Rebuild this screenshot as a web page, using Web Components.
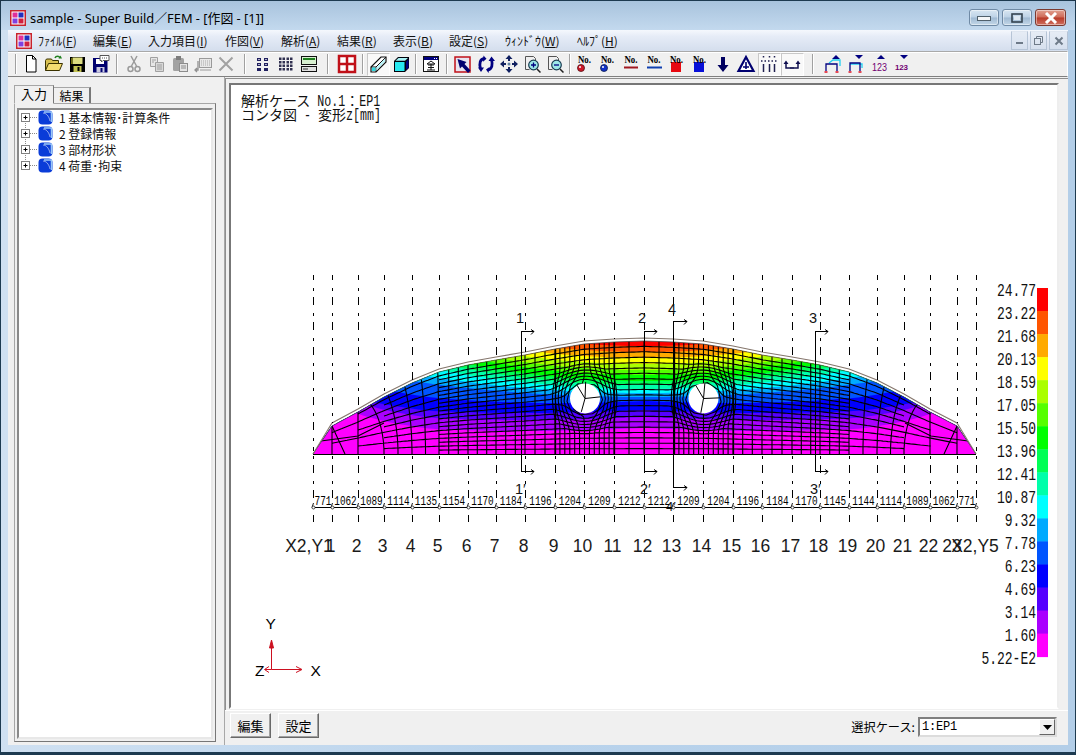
<!DOCTYPE html>
<html lang="ja"><head><meta charset="utf-8"><title>sample - Super Build／FEM</title>
<style>
html,body{margin:0;padding:0;background:#1b3347}
body{width:1076px;height:755px;overflow:hidden;font:12px "Noto Sans CJK JP",sans-serif;color:#000}
</style></head><body>
<win-frame>
  <win-titlebar slot="title">sample - Super Build／FEM - [作図 - [1]]</win-titlebar>
  <win-menubar slot="menu">
    <menu-item w="55">ﾌｧｲﾙ(<u>F</u>)</menu-item>
    <menu-item w="55">編集(<u>E</u>)</menu-item>
    <menu-item w="77">入力項目(<u>I</u>)</menu-item>
    <menu-item w="56">作図(<u>V</u>)</menu-item>
    <menu-item w="56">解析(<u>A</u>)</menu-item>
    <menu-item w="56">結果(<u>R</u>)</menu-item>
    <menu-item w="56">表示(<u>B</u>)</menu-item>
    <menu-item w="56">設定(<u>S</u>)</menu-item>
    <menu-item w="72">ｳｨﾝﾄﾞｳ(<u>W</u>)</menu-item>
    <menu-item w="60">ﾍﾙﾌﾟ(<u>H</u>)</menu-item>
  </win-menubar>
  <win-toolbar slot="toolbar"></win-toolbar>
  <side-panel slot="side">
    <tree-item n="1">1 基本情報･計算条件</tree-item>
    <tree-item n="2">2 登録情報</tree-item>
    <tree-item n="3">3 部材形状</tree-item>
    <tree-item n="4" last>4 荷重･拘束</tree-item>
  </side-panel>
  <drawing-view slot="drawing"></drawing-view>
  <footer-bar slot="footer">
    <push-button>編集</push-button>
    <push-button>設定</push-button>
    <case-combo label="選択ケース:" value="1:EP1"></case-combo>
  </footer-bar>
</win-frame>
<script>
const def=(name,css,html,init)=>customElements.define(name,class extends HTMLElement{
  constructor(){super();const r=this.attachShadow({mode:'open'});
    r.innerHTML=`<style>${css}</style>${typeof html==='function'?html(this):html}`;}
  connectedCallback(){if(init&&!this._i){this._i=1;init(this);}}
});
const UI='"Noto Sans CJK JP",sans-serif';
const appIcon=`<svg width="16" height="16" viewBox="0 0 16 16"><rect width="16" height="16" fill="#c8232c"/><rect x="1.5" y="1.5" width="13" height="13" fill="#fff"/><rect x="2.5" y="2.5" width="5" height="5" fill="#e0309a"/><rect x="8.5" y="2.5" width="5" height="5" fill="#2030c0"/><rect x="2.5" y="8.5" width="5" height="5" fill="#8040e0"/><rect x="8.5" y="8.5" width="5" height="5" fill="#d02040"/></svg>`;

def('win-frame',`
:host{display:flex;flex-direction:column;width:1076px;height:755px;box-sizing:border-box;position:relative;
  background:linear-gradient(90deg,#cfe0f1 0,#b9d3ec 50%,#b3cee8 100%);border:1px solid #1d3a50;border-bottom-width:3px;border-radius:6px 6px 0 0;padding:0 7px 7px}
.client{flex:1;display:flex;min-height:0;background:#f0f0f0}
`,`<slot name="title"></slot><slot name="menu"></slot><slot name="toolbar"></slot>
<div class="client"><slot name="side"></slot><div style="flex:1;display:flex;flex-direction:column;min-width:0;border-left:1px solid #a8a8a8"><slot name="drawing"></slot><slot name="footer"></slot></div></div>`);

def('win-titlebar',`
:host{display:flex;align-items:center;height:29px;box-sizing:border-box;margin:0 -7px;padding:4px 9px 0;
  background:linear-gradient(180deg,#a8c3dd 0,#c3d9ee 100%);font:12.85px "Noto Sans","Noto Sans CJK JP",sans-serif;color:#000}
.ic{margin-right:4px;display:flex}.t{flex:1;white-space:nowrap}
.b{display:flex;gap:3px}
.w{box-sizing:border-box;height:17px;width:30px;border:1px solid #6f8aa5;border-radius:3px;display:flex;align-items:center;justify-content:center;background:linear-gradient(180deg,#d8e6f2 0,#bdd2e6 48%,#9fb9d2 52%,#c3d7e8 100%);box-shadow:inset 0 0 0 1px rgba(255,255,255,.45)}
.c{width:31px;background:linear-gradient(180deg,#e0a090 0,#cf6a58 48%,#b83a28 52%,#d07060 100%);border-color:#7c3a30}
`,`<span class="ic">${appIcon}</span><span class="t"><slot></slot></span>
<span class="b"><span class="w"><svg width="14" height="8"><rect x="0.5" y="2.5" width="13" height="4" fill="#f4f6f8" stroke="#50606c"/></svg></span>
<span class="w"><svg width="12" height="10"><rect x="1" y="1" width="10" height="8" fill="none" stroke="#34434f" stroke-width="1.6"/><rect x="3" y="3" width="6" height="4" fill="#dfe9f2"/></svg></span>
<span class="w c"><svg width="14" height="12"><path d="M2 1l10 10M12 1L2 11" stroke="#fff" stroke-width="3"/></svg></span></span>`);

def('win-menubar',`
:host{display:flex;align-items:center;height:21px;box-sizing:border-box;padding-left:8px;
  background:linear-gradient(180deg,#f5f8fd 0,#e6ecf7 30%,#d4deed 100%)}
.ic{display:flex;margin-right:6px}.m{display:flex;flex:1}
.b{display:flex;gap:2px;align-self:flex-start;margin-top:1px}
.w{box-sizing:border-box;width:17px;height:19px;border:1px solid #b6c4d6;border-top-color:#dfe6f0;display:flex;align-items:center;justify-content:center;background:linear-gradient(#e6ecf5,#d6e0ee)}
`,`<span class="ic">${appIcon}</span><span class="m"><slot></slot></span>
<span class="b"><span class="w"><svg width="9" height="9"><rect x="1" y="6" width="7" height="2" fill="#6e7a88"/></svg></span>
<span class="w"><svg width="11" height="11" fill="none" stroke="#6e7a88"><rect x="1.5" y="3.5" width="6" height="6"/><path d="M3.5 3V1.5h6v6H8"/></svg></span>
<span class="w" style="width:19px"><svg width="10" height="10"><path d="M1.5 1.5l7 7M8.5 1.5l-7 7" stroke="#6e7a88" stroke-width="2"/></svg></span></span>`);

customElements.define('menu-item',class extends HTMLElement{constructor(){super();
  this.attachShadow({mode:'open'}).innerHTML=`<style>:host{display:block;white-space:nowrap;font:12px ${UI};color:#111;line-height:20px}</style><slot></slot>`;}
  connectedCallback(){this.style.width=this.getAttribute('w')+'px';}});

const no=(extra,x=3.5)=>`<text x="${x}" y="9" font-family="Liberation Serif" font-weight="700" font-size="11" textLength="13" lengthAdjust="spacingAndGlyphs" fill="#000">No.</text>${extra}`;
const tri=(x,up)=>up?`<path d="M${x-4} 5l4-4 4 4z" fill="#000080"/>`:`<path d="M${x-4} 1h8l-4 4z" fill="#000080"/>`;
const ICONS={
new:`<path d="M5.5 1.5h6l3.5 3.5v13H5.5z" fill="#fff" stroke="#000"/><path d="M11.5 1.5V5H15" fill="none" stroke="#000"/>`,
open:`<path d="M1.5 16.5V6.5l1-1.5h5l1 1.5h6v3" fill="#d8c050" stroke="#3a3200"/><path d="M1.5 16.5l3-7h14l-3 7z" fill="#f4dc70" stroke="#3a3200"/><path d="M11 4c1-2.500 4-2.500 5 0" fill="none" stroke="#208020" stroke-width="1.500"/><path d="M14.500 4.500h3.500l-1.500-3z" fill="#208020"/>`,
save:`<rect x="3" y="3" width="15" height="15" fill="#000"/><rect x="5.500" y="3.500" width="10" height="6.500" fill="#dcdc80"/><rect x="4" y="4" width="1.500" height="6" fill="#70700c"/><rect x="6.500" y="12" width="8" height="6" fill="#c0c050"/><rect x="10.500" y="13" width="2" height="4" fill="#000"/>`,
saveall:`<rect x="3" y="4" width="14.500" height="14.500" fill="#00006e"/><rect x="6" y="5" width="8" height="5" fill="#fff"/><rect x="6.500" y="13" width="8" height="5.500" fill="#c8c8e0"/><rect x="10.500" y="14" width="2" height="4" fill="#00006e"/><path d="M10 1.500h9v5h-6l-1.500 1.500V6.500H10z" fill="#fff" stroke="#555"/><path d="M12 4h5" stroke="#555" stroke-dasharray="1 1"/>`,
cut:`<g stroke="#9a9a9a" fill="none" stroke-width="1.500"><path d="M7 2l5.500 10M13 2L7.500 12"/><circle cx="6.500" cy="15" r="2.500"/><circle cx="13.500" cy="15" r="2.500"/></g>`,
copy:`<g fill="#e6e6e6" stroke="#a0a0a0"><path d="M3.500 3.500h7v9h-7z"/><path d="M8.500 8.500h8v9h-8z" fill="#d8d8d8"/></g><path d="M5 6h4M5 8h2M10 11h5M10 13h5M10 15h5" stroke="#a0a0a0"/>`,
paste:`<rect x="3" y="4" width="11" height="13" rx="1.500" fill="#a2a2a2"/><rect x="6" y="2" width="5" height="4" fill="#7d7d7d"/><rect x="9.500" y="9.500" width="8" height="8" fill="#e4e4e4" stroke="#8c8c8c"/><path d="M11 12h5M11 14h5" stroke="#8c8c8c"/>`,
imp:`<rect x="6.500" y="4.500" width="12" height="9" fill="#e8e8e8" stroke="#9a9a9a"/><path d="M8 7h9M8 9h9M8 11h9" stroke="#a8a8a8" stroke-dasharray="1 1"/><path d="M5 7v9h-3m2-2l-2 2 2 2" fill="none" stroke="#909090" stroke-width="1.300"/><path d="M7 16h11" stroke="#9a9a9a"/>`,
del:`<path d="M3.500 3.500l13 13M16.500 3.500l-13 13" stroke="#a2a2a2" stroke-width="2"/>`,
g1:`<g fill="#202060"><rect x="4" y="4" width="4" height="3"/><rect x="11" y="4" width="4" height="3"/><rect x="4" y="9" width="4" height="3"/><rect x="11" y="9" width="4" height="3"/><rect x="4" y="14" width="4" height="3"/><rect x="11" y="14" width="4" height="3"/></g><path d="M5 5.500h2M12 5.500h2M5 10.500h2M12 10.500h2" stroke="#b0b0c8"/>`,
g2:`<g fill="#303050">${[3,6.5,10,13.5].map(y=>[3,6.5,10.5,14].map(x=>`<rect x="${x}" y="${y+.5}" width="2.500" height="2.500"/>`).join('')).join('')}</g>`,
list:`<rect x="2.500" y="2.500" width="15" height="8" fill="#d8f0d0" stroke="#111"/><path d="M4 5h12" stroke="#208020" stroke-width="2"/><rect x="2.500" y="12.500" width="15" height="5" fill="#e0e0e0" stroke="#111"/><path d="M4 15h5" stroke="#333"/>`,
redgrid:`<rect x="2" y="2" width="16" height="16" fill="#fff" stroke="#c01018" stroke-width="2.500"/><path d="M10 2v16M2 10h16" stroke="#c01018" stroke-width="2.500"/>`,
iso1:`<path d="M3 18v-5L13 3h5v5L8 18z" fill="#fff" stroke="#111" stroke-width="1.200"/><path d="M3 13h5L18 3" fill="none" stroke="#111"/><path d="M8 13v5" stroke="#111"/><path d="M4 17v-3.500h3.500V17z" fill="#30d8e0"/><path d="M8.500 13.500L17 4.500v3L8.500 16.500z" fill="#b8f4f8"/>`,
iso2:`<path d="M3 7l4-4h11v11l-4 4H3z" fill="#00000a"/><path d="M4 8h9.500v9H4z" fill="#28e8f0"/><path d="M4.500 6.800L7.500 4h9.500l-3 2.800z" fill="#a8f4f8"/><path d="M15 8l2.500-3v9L15 16z" fill="#000080"/>`,
fit:`<rect x="2.500" y="2.500" width="15" height="15" fill="#fff" stroke="#111"/><rect x="3" y="3" width="14" height="3" fill="#000080"/><path d="M13 4.500h3" stroke="#fff" stroke-dasharray="1 1"/><path d="M10 7l-4 3h8zM7 11h6M6 16h8M7 13.500h6M10 10v6" fill="none" stroke="#111"/>`,
sel:`<rect x="2" y="3" width="15" height="15" fill="#e8e4f0" stroke="#c01018" stroke-width="1.500"/><path d="M4.500 5l9 3-2 2 6 6.500-2.500 2.500-6-6.500-2 2z" fill="#000070"/>`,
rot:`<g fill="none" stroke="#000080" stroke-width="2.800"><path d="M8.500 4.500C4 5 3 9 4.500 15"/><path d="M12 16c4-1 5-5 3.500-10.500"/></g><path d="M7.500 1.500l3 3.200-3.500 3zM2 13.500h6l-3 4.500zM12.500 19l-2.500-3.500 3.500-2.500zM12.500 7h6.500L15.500 2.500z" fill="#000080"/>`,
move:`<g fill="#102060"><path d="M10 1l3.500 4h-7zM10 19l-3.500-4h7zM1 10l4-3.500v7zM19 10l-4 3.500v-7z"/></g><path d="M10 5v2M10 13v2M5 10h2M13 10h2" stroke="#102060" stroke-width="2"/><circle cx="10" cy="10" r="1.500" fill="#6080a0"/>`,
zin:`<path d="M3.500 2.500h8l2 2v3M3.500 2.500v13h4" fill="none" stroke="#555"/><circle cx="11.500" cy="11" r="4.800" fill="#9ee8e8" stroke="#183a50" stroke-width="1.200"/><path d="M15 15l3.500 3.500" stroke="#222" stroke-width="1.500"/><path d="M9 11h5M11.500 8.500v5" stroke="#000080" stroke-width="1.300"/>`,
zout:`<path d="M3.500 2.500h8l2 2v3M3.500 2.500v13h4" fill="none" stroke="#555"/><circle cx="11.500" cy="11" r="4.800" fill="#9ee8e8" stroke="#183a50" stroke-width="1.200"/><path d="M15 15l3.500 3.500" stroke="#222" stroke-width="1.500"/><path d="M9 11h5" stroke="#000080" stroke-width="1.300"/>`,
nored:`<circle cx="6" cy="14" r="3.500" fill="#d01828" stroke="#501014" stroke-width=".8"/><circle cx="5" cy="13" r="1" fill="#fff"/>`+no('',3),
noblue:`<circle cx="6" cy="14" r="3.500" fill="#1030c8" stroke="#102048" stroke-width=".8"/><circle cx="5" cy="13" r="1" fill="#fff"/>`+no('',3),
nol1:no(`<rect x="3" y="12.500" width="14" height="2" fill="#a01820"/>`),
nol2:no(`<rect x="3" y="12.500" width="15" height="2" fill="#1040b0"/>`),
nos1:`<rect x="4" y="8" width="10" height="10" fill="#e80810"/>`+no('',3),
nos2:`<rect x="4" y="8" width="10" height="10" fill="#0810d8"/>`+no('',3),
down:`<path d="M8 3h4v8h3.500L10 18l-5.500-7H8z" fill="#000060"/>`,
warn:`<path d="M10 3L2.500 17h15z" fill="#fff" stroke="#000070" stroke-width="2.200"/><path d="M10 8v7M7 13h6" stroke="#000070" stroke-width="1.600"/>`,
lines:`<g fill="none" stroke="#202050"><path d="M4.500 10v8M10.500 10v8M15.500 10v8" stroke-width="1.500"/><path d="M2 7h16" stroke-dasharray="1.500 2" stroke-width="1.500"/><path d="M4.500 2v3M10.500 2v3M15.500 2v3" stroke-dasharray="1.500 1.500" stroke-width="1.500"/></g>`,
ubar:`<path d="M4 9v5h12V9" fill="none" stroke="#101050" stroke-width="1.500"/><path d="M1.500 10l2.500-3.500 2.500 3.500zM13.500 10l2.500-3.500 2.500 3.500z" fill="#101050"/><path d="M8 14h4" stroke="#101050"/>`,
fr1:tri(13,1)+`<path d="M6 9l4-3h7v6" fill="none" stroke="#20d0f0" stroke-width="1.300"/><path d="M3 17v-7h11v7" fill="none" stroke="#000080" stroke-width="1.300"/><path d="M1.500 18h3M12.500 18h3" stroke="#e01020" stroke-width="1.500"/>`,
fr2:tri(13,0)+`<path d="M4 10h12v4" fill="none" stroke="#20d0f0" stroke-width="1.300"/><path d="M4 17V9h10v8" fill="none" stroke="#000080" stroke-width="1.300"/><path d="M2.500 18h3M12.500 18h3" stroke="#e01020" stroke-width="1.500"/>`,
n1:tri(12,1)+`<text x="3" y="17" font-family="Liberation Sans" font-size="11.500" textLength="15" lengthAdjust="spacingAndGlyphs" fill="#700070">123</text>`,
n2:tri(12,0)+`<text x="3" y="16" font-family="Liberation Sans" font-weight="700" font-size="8" textLength="13" lengthAdjust="spacing" fill="#700070">123</text>`,
};
customElements.define('tool-button',class extends HTMLElement{constructor(){super();
  this.attachShadow({mode:'open'}).innerHTML=`<style>
  :host{display:flex;align-items:center;justify-content:center;width:23px;height:23px;box-sizing:border-box;flex:none}
  :host([pressed]){border:1px solid;border-color:#c8c8c8 #fff #fff #c8c8c8;background:#f9f9f9}
  svg{display:block;overflow:visible}</style><svg width="20" height="20" viewBox="0 0 20 20"></svg>`;}
  connectedCallback(){this.shadowRoot.querySelector('svg').innerHTML=ICONS[this.getAttribute('icon')]||'';}});
customElements.define('tool-sep',class extends HTMLElement{constructor(){super();
  this.attachShadow({mode:'open'}).innerHTML=`<style>:host{display:flex;justify-content:center;height:20px;flex:none}
  i{display:block;width:1px;background:#a0a0a0;border-right:1px solid #fff}</style><i></i>`;}
  connectedCallback(){this.style.width=this.getAttribute('w')+'px';}});

def('win-toolbar',`
:host{display:flex;align-items:center;height:26px;box-sizing:border-box;background:#f0f0f0;border:1px solid #a9a9a9;border-left:0;border-right:1px solid #fff;border-bottom-color:#808080;padding-left:3.500px;box-shadow:inset 0 1px #fff}
`,'',el=>{
  const seq=['s3','new','open','save','saveall','s11','cut','copy','paste','imp','del','s14','g1','g2','list','s15','redgrid','s8','iso1*','iso2','s7','fit','s9','sel','rot','move','zin','zout','s7','nored','noblue','nol1','nol2','nos1','nos2','down','warn','lines*','ubar*','s18','fr1','fr2','n1','n2'];
  const r=el.shadowRoot;
  seq.forEach(k=>{
    if(/^s\d/.test(k)){const s=document.createElement('tool-sep');s.setAttribute('w',k.slice(1));r.append(s);if(k==='s3'){s.style.width='8px';}}
    else{const b=document.createElement('tool-button');const p=k.endsWith('*');b.setAttribute('icon',p?k.slice(0,-1):k);if(p)b.setAttribute('pressed','');r.append(b);}
  });
});

def('side-panel',`
:host{display:block;width:216px;flex:none;box-sizing:border-box;padding:7px 8px 2px 6px;font:12px ${UI}}
.tabs{display:flex;height:19px;align-items:flex-end}
.tab{box-sizing:border-box;border:1px solid #a6a6a6;border-bottom:0;display:flex;align-items:center;justify-content:center;background:#f0f0f0}
.on{width:40px;height:19px;position:relative;border-bottom:1px solid #f0f0f0;margin-bottom:-1px;border-right:1px solid #777;font-size:13px;padding-bottom:2px}
.off{width:37px;height:16px;border-right:2px solid #777;border-left:0}
.page{height:639px;box-sizing:border-box;border:1px solid #a6a6a6;border-right-color:#777;border-bottom-color:#777;padding:4px 2px 2px 2px}
.tree{height:100%;box-sizing:border-box;background:#fff;border:2px solid;border-color:#8a8a8a #e8e8e8 #e8e8e8 #8a8a8a}
::slotted(:first-child){margin-top:-1px}
`,`<div class="tabs"><div class="tab on">入力</div><div class="tab off">結果</div></div>
<div class="page"><div class="tree"><slot></slot></div></div>`);

customElements.define('tree-item',class extends HTMLElement{constructor(){super();
  this.attachShadow({mode:'open'}).innerHTML=`<style>
  :host{display:flex;align-items:center;height:16px;font:12px ${UI};white-space:nowrap;color:#111}
  svg{flex:none;margin-right:5px}</style>
  <svg width="35" height="16" viewBox="0 0 35 16"><path d="M6.500 0V16" class="v" stroke="#888" stroke-dasharray="1 1"/><path d="M11 8.500h8" stroke="#888" stroke-dasharray="1 1"/>
  <rect x="2.500" y="4.500" width="8" height="8" fill="#fff" stroke="#808080"/><path d="M4.500 8.500h4M6.500 6.500v4" stroke="#000"/>
  <rect x="19.500" y="1.500" width="14" height="14" rx="4" fill="#0a3cd8"/><path d="M25 3h6.500q1 0 1 1v9" fill="none" stroke="#9ac8f8" stroke-width="1.600"/><path d="M24 4c3 0 6 3 7 8" fill="none" stroke="#fff" stroke-width=".8" opacity=".7"/></svg><slot></slot>`;}
  connectedCallback(){const v=this.shadowRoot.querySelector('.v');if(this.hasAttribute('last'))v.setAttribute('d','M6.500 0V8');if(this.getAttribute('n')==='1')v.setAttribute('d','M6.500 8V16');}});

def('footer-bar',`:host{display:flex;align-items:flex-start;height:35px;box-sizing:border-box;padding:2px 10px 0 5px;gap:7px;border-top:1px solid #fff}`,`<slot></slot>`);
def('push-button',`
:host{display:flex;align-items:center;justify-content:center;width:41px;height:25px;box-sizing:border-box;font:13px ${UI};background:#f0f0f0;border:1px solid;border-color:#fff #696969 #696969 #fff;box-shadow:inset -1px -1px #a0a0a0}
`,`<slot></slot>`);
customElements.define('case-combo',class extends HTMLElement{constructor(){super();
  this.attachShadow({mode:'open'});}
  connectedCallback(){this.shadowRoot.innerHTML=`<style>
  :host{display:flex;align-items:center;margin:4px 1px 0 auto;font:12px ${UI}}
  .l{margin-right:3px;white-space:nowrap;font-size:12.200px}
  .b{box-sizing:border-box;width:139px;height:20px;background:#fff;border:2px solid;border-color:#808080 #dcdcdc #dcdcdc #808080;display:flex;align-items:center;padding-left:2px;font:12px "Liberation Mono",monospace}
  .v{flex:1;letter-spacing:-.2px}
  .d{box-sizing:border-box;width:16px;height:16px;border:1px solid;border-color:#fff #666 #666 #fff;background:#f0f0f0;display:flex;align-items:center;justify-content:center}
  </style><span class="l">${this.getAttribute('label')}</span><span class="b"><span class="v">${this.getAttribute('value')}</span><span class="d"><svg width="9" height="5"><path d="M0 0h9L4.500 5z" fill="#000"/></svg></span></span>`;}});

/* ---------- drawing ---------- */
def('drawing-view',`
:host{display:block;height:632px;box-sizing:border-box;position:relative;background:#f0f0f0;border:1px solid #8e8e8e;border-width:1px 0 0 1px;margin-top:1px;padding:4px 9px 1px 3px}
.in{height:100%;box-sizing:border-box;border:2px solid;border-color:#777 #eee #fff #777;background:#fff;overflow:hidden}
svg{display:block}
`,`<div class="in"><svg width="827" height="624" viewBox="232 85 827 624" xmlns="http://www.w3.org/2000/svg"></svg></div>`,el=>{
  const X=[314,333,359,385,413,440,469,497,526,556,585,615,645,674,704,734,763,793,821,850,878,905,931,958,977];
  const half=[454,426,412,397,383,372,365,360,355,349,344,342,341];
  const T=X.map((_,i)=>half[i<=12?i:24-i]);
  const top=x=>{if(x<=X[0])return T[0];if(x>=X[24])return T[24];for(let i=0;i<24;i++)if(x<=X[i+1]){const t=(x-X[i])/(X[i+1]-X[i]);return T[i]+(T[i+1]-T[i])*t;}};
  const cols=['#ff0000','#ff5500','#ffaa00','#ffff00','#aaff00','#55ff00','#00ff00','#00ff55','#00ffaa','#00ffff','#00aaff','#0055ff','#0000ff','#5500ff','#aa00ff','#ff00ff'];
  const yb=[330,346,352,358,364,370,375,381,385,389,393,397,401,410,417,428];
  const R=[17,17,17,17,17,17,17,17,16,14,11,9,3,0,0,0];
  const B=[0,0,0,0,0,0,0,0,0,0,0,6,14,16,20,19];
  const band=(k,x)=>{const d=Math.abs(x-645.5);let y=yb[k]-R[k]*Math.pow(d/176,2)-B[k]*Math.pow(Math.max(0,(d-200)/100),2);
    if(k>=12)y+=3*Math.sin(Math.PI*Math.min(d,240)/240);return y;};
  let s='';
  const archPts=[];for(let i=0;i<25;i++)archPts.push(X[i]+','+T[i]);
  s+=`<defs><clipPath id="arch"><polygon points="${archPts.join(' ')}"/></clipPath></defs>`;
  const g=[];
  cols.forEach((c,k)=>{let p=[];for(let x=314;x<=977;x+=5)p.push(x+','+band(k,x).toFixed(1));g.push(`<polygon fill="${c}" points="314,455 ${p.join(' ')} 977,455"/>`);});
  /* mesh */
  const holes=[[586,398.500],[704.500,398.500]];
  const warp=(x,y)=>{for(const [cx,cy] of holes){const dx=x-cx,dy=y-cy,r=Math.hypot(dx,dy),Rm=36,Rr=15;
      if(r<Rm&&r>.01){const n=Rr+r*(Rm-Rr)/Rm;return[cx+dx*n/r,cy+dy*n/r];}}return[x,y];};
  const N=21;const lines=[];
  for(let j=1;j<N;j++){
    let mn=440;if(j%2==0)mn=385;if(j%4==0)mn=359;if(j%8==0)mn=333;
    const p=[];for(let x=mn;x<=1291-mn;x+=2.500){const w=warp(x,454-j/N*(454-top(x)));p.push(w[0].toFixed(1)+','+w[1].toFixed(1));}
    lines.push(`<polyline points="${p.join(' ')}"/>`);
  }
  const colX=[];const sub=(a,b,n)=>{for(let i=0;i<n;i++)colX.push(a+(b-a)*i/n);};
  sub(333,359,1);sub(359,385,1);sub(385,413,2);sub(413,440,2);sub(440,469,3);sub(469,497,3);sub(497,526,3);sub(526,556,3);
  sub(556,615,12);sub(615,675,4);sub(675,734,12);sub(734,763,3);sub(763,793,3);sub(793,821,3);sub(821,850,3);sub(850,878,2);sub(878,905,2);sub(905,931,1);sub(931,958,1);colX.push(958);
  colX.forEach(x0=>{const d=Math.abs(x0-645.5),sg=x0<645?-1:1,tilt=d>200&&d<=262?(d-200)*.22*sg:0;const p=[];
    for(let t=0;t<=1.001;t+=.05){const xx=x0+tilt*t*t;const w=warp(xx,454-t*(454-top(xx)));p.push(w[0].toFixed(1)+','+w[1].toFixed(1));}
    lines.push(`<polyline points="${p.join(' ')}"/>`);});
  lines.push(`<path d="M322 441L359 436L385 423M346 454L333 426M969 441L932 436L906 423M945 454L958 426"/>`);
  s+=`<g clip-path="url(#arch)">${g.join('')}<g fill="none" stroke="#000" stroke-width="1.100">${lines.join('')}</g><g stroke="#000" stroke-width="1.300">${[556,615,675,734].map(x=>`<path d="M${x}.5 ${top(x)}V454"/>`).join('')}</g></g>`;
  /* arch outlines */
  const outer=X.map((x,i)=>x+','+(T[i]-(i==0||i==24?0:3))).join(' ');
  s+=`<polyline points="${archPts.join(' ')}" fill="none" stroke="#344" stroke-width=".9" opacity=".8"/><polyline points="${outer}" fill="none" stroke="#85766c" stroke-width="1.100"/>`;
  s+=`<path d="M314 454.500H977" stroke="#000" stroke-width="1"/>`;
  /* holes */
  const holeS=[[[46,-5],[-24,-40],[2,-50],[-11,40]],[[50,-2],[-23,-39],[4,-45],[-8,43]]];
  holes.forEach(([cx,cy],i)=>{s+=`<circle cx="${cx}" cy="${cy}" r="15" fill="#fff"/>`+holeS[i].map(([a,b])=>`<path d="M${cx} ${cy}L${cx+a/3} ${cy+b/3}" stroke="#000"/>`).join('');});
  /* station lines: the part above the mesh and the part below it */
  X.forEach((x,i)=>{s+=`<path d="M${x+.5} 275V${T[i]-3}" stroke="#000" stroke-dasharray="8 8 3 6" stroke-dashoffset="3"/><path d="M${x+.5} 456V522" stroke="#000" stroke-dasharray="8 8 3 6" stroke-dashoffset="16"/>`;});
  /* sections */
  const arrow=(x,y,l)=>`<path d="M${x} ${y}.5H${x+l}M${x+l-3} ${y-2}.5L${x+l} ${y}.5L${x+l-3} ${y+3}.5" fill="none" stroke="#000"/>`;
  const T2=(x,y,t,sz=14.500)=>`<text x="${x}" y="${y}" font-family="Liberation Sans" font-size="${sz}" fill="#111">${t}</text>`;
  [[522,331,471,'1',517,323,"1′",516,494],[645,331,471,'2',639,323,"2′",641,494],[816,331,471,'3',810,323,"3′",811,494]].forEach(([x,a,b,t,tx,ty,u,ux,uy])=>{
    s+=`<path d="M${x+.5} ${a}V${b+1}" stroke="#000"/>`+arrow(x,a,13)+arrow(x,b,13)+T2(tx,ty,t)+T2(ux,uy,u);});
  s+=`<path d="M674.5 321V488" stroke="#000"/>`+arrow(674,321,14)+arrow(674,487,14)+T2(669,314,'4')+T2(667,511,"4′",13);
  /* dimension line */
  s+=`<path d="M314 507.500H977" stroke="#000"/>`;
  const dims=[771,1062,1089,1114,1135,1154,1170,1184,1196,1204,1209,1212,1212,1209,1204,1196,1184,1170,1145,1144,1114,1089,1062,771];
  const M=(x,y,t,sz,w,anchor='middle',fill='#111')=>`<text x="${x}" y="${y}" font-family="Liberation Mono" font-size="${sz}" text-anchor="${anchor}" textLength="${w}" lengthAdjust="spacingAndGlyphs" fill="${fill}">${t}</text>`;
  dims.forEach((d,i)=>{s+=M((X[i]+X[i+1])/2+.5,505,d,13,(''+d).length*5.600,'middle','#000');});
  X.forEach(x=>{s+=`<path d="M${x+.5} 503L${x-1} 507.500" stroke="#000" stroke-width=".9"/><circle cx="${x+.5}" cy="507.500" r="1.500" fill="#fff" stroke="#222" stroke-width=".8"/>`;});
  /* station labels */
  const S=(x,t)=>`<text x="${x}" y="552" font-family="Liberation Sans" font-size="17.500" text-anchor="middle" fill="#1a1a1a">${t}</text>`;
  X.forEach((x,i)=>{if(i==0)s+=S(310,'X2,Y1');else if(i==24)return;else s+=S(i==23?953:x-1.5,i);});
  s+=S(976,'X2,Y5');
  /* legend */
  cols.forEach((c,i)=>{s+=`<rect x="1038" y="${288+23.040*i}" width="11" height="23.500" fill="${c}"/>`;});
  ['24.77','23.22','21.68','20.13','18.59','17.05','15.50','13.96','12.41','10.87','9.32','7.78','6.23','4.69','3.14','1.60','5.22-E2'].forEach((t,i)=>{
    s+=M(1037,296+23*i,t,17.500,t.length*7.800,'end');});
  /* axes */
  s+=`<g stroke="#cc1020" fill="none"><path d="M272.500 669.500V640M272.500 669.500H302M272.500 669.500H266"/><path d="M270.500 648l2-8 2 8z" fill="#cc1020"/><path d="M297 666.500l6 3-6 3M270 666.500l-4.500 3 4.500 3"/></g>`;
  s+=`<g font-family="Liberation Sans" font-size="15.500" fill="#000"><text x="266.500" y="629">Y</text><text x="256" y="676">Z</text><text x="311.500" y="675.500">X</text></g>`;
  /* heading */
  const head=(y,parts)=>`<text x="242" y="${y}" fill="#111">${parts.map(p=>p[1]?`<tspan font-family="Liberation Mono" font-size="16" textLength="${p[0].length*7}" lengthAdjust="spacingAndGlyphs">${p[0]}</tspan>`:`<tspan font-family="Noto Sans CJK JP" font-size="14">${p[0]}</tspan>`).join('')}</text>`;
  s+=head(106,[['解析ケース'],[' No.1',1],['：'],['EP1',1]]);
  s+=head(120,[['コンタ図'],[' - ',1],['変形'],['z[mm]',1]]);
  el.shadowRoot.querySelector('svg').innerHTML=s;
});
</script>
</body></html>
